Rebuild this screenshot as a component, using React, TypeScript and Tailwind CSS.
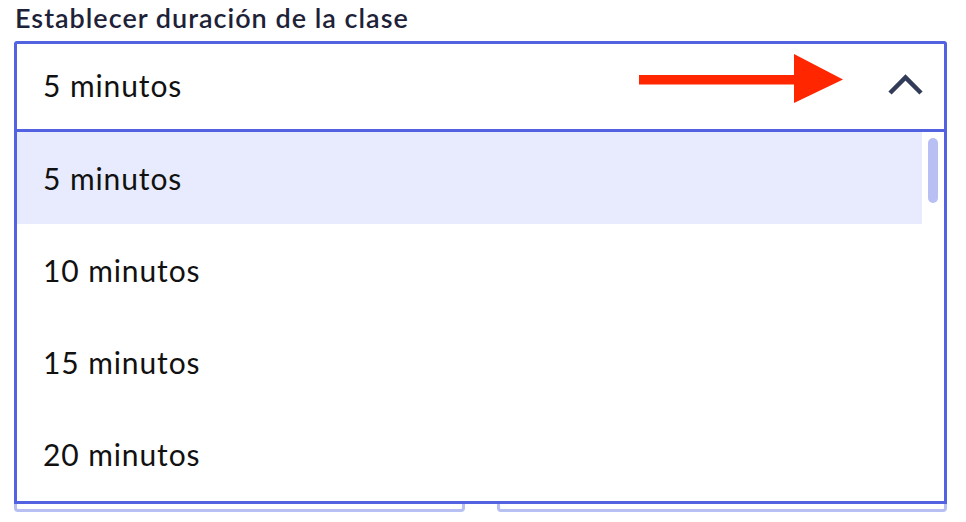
import { useState } from 'react'

const options = ['5 minutos', '10 minutos', '15 minutos', '20 minutos']

function ChevronUp() {
  return (
    <svg width="36" height="22" viewBox="0 0 36 22" className="block">
      <polyline
        points="2,19 17.5,3.5 33,19"
        fill="none"
        stroke="#323c58"
        strokeWidth="4.5"
        strokeLinecap="butt"
        strokeLinejoin="miter"
      />
    </svg>
  )
}

function RedArrow() {
  return (
    <svg width="206" height="50" viewBox="0 0 206 50" className="absolute left-[622px] top-[10px]">
      <rect x="0" y="21" width="157" height="9.5" fill="#ff2600" />
      <polygon points="155,0 204,25.5 155,49" fill="#ff2600" />
    </svg>
  )
}

export default function App() {
  const [selected] = useState(0)

  return (
    <div
      className="h-[522px] w-[966px] overflow-hidden bg-white"
      style={{ fontFamily: 'Lato, "Noto Sans", sans-serif' }}
    >
      <div className="ml-[14px] w-[933px]">
        {/* Label */}
        <div className="pt-[1px] pb-[7px] pl-[1px] text-[27px] leading-[33px] font-semibold tracking-[1px] text-[#1d2238]">
          Establecer duración de la clase
        </div>

        <div className="relative">
          {/* Select trigger */}
          <div className="relative flex h-[91px] items-center justify-between rounded-t-[3px] border-[3px] border-[#5262e0] bg-white pb-[3px] pl-[26px] pr-[20px]">
            <span className="text-[30px] leading-[36px] tracking-[0.9px] text-[#111111]">{options[selected]}</span>
            <ChevronUp />
            <RedArrow />
          </div>

          {/* Fields under the open list */}
          <div className="mt-[24px] grid grid-cols-2 gap-[32px]">
            <div className="h-[356px] rounded-[4px] border-[3px] border-[#b8c0f3]" />
            <div className="h-[356px] rounded-[4px] border-[3px] border-[#b8c0f3]" />
          </div>

          {/* Options list */}
          <div className="absolute left-0 right-0 top-[91px] z-10 flex border-x-[3px] border-b-[3px] border-[#5262e0] bg-white">
            <ul className="flex-1">
              {options.map((opt, i) => (
                <li
                  key={opt}
                  className={`flex h-[92px] items-center pb-[1px] pl-[26px] text-[30px] leading-[36px] tracking-[0.9px] text-[#111111] ${
                    i === selected ? 'bg-[#e7ebfd]' : ''
                  }`}
                >
                  {opt}
                </li>
              ))}
              <li className="h-[1px]" />
            </ul>
            <div className="w-[22px] pl-[6px] pt-[6px]">
              <div className="h-[65px] w-[10px] rounded-full bg-[#b8c0f3]" />
            </div>
          </div>
        </div>
      </div>
    </div>
  )
}
